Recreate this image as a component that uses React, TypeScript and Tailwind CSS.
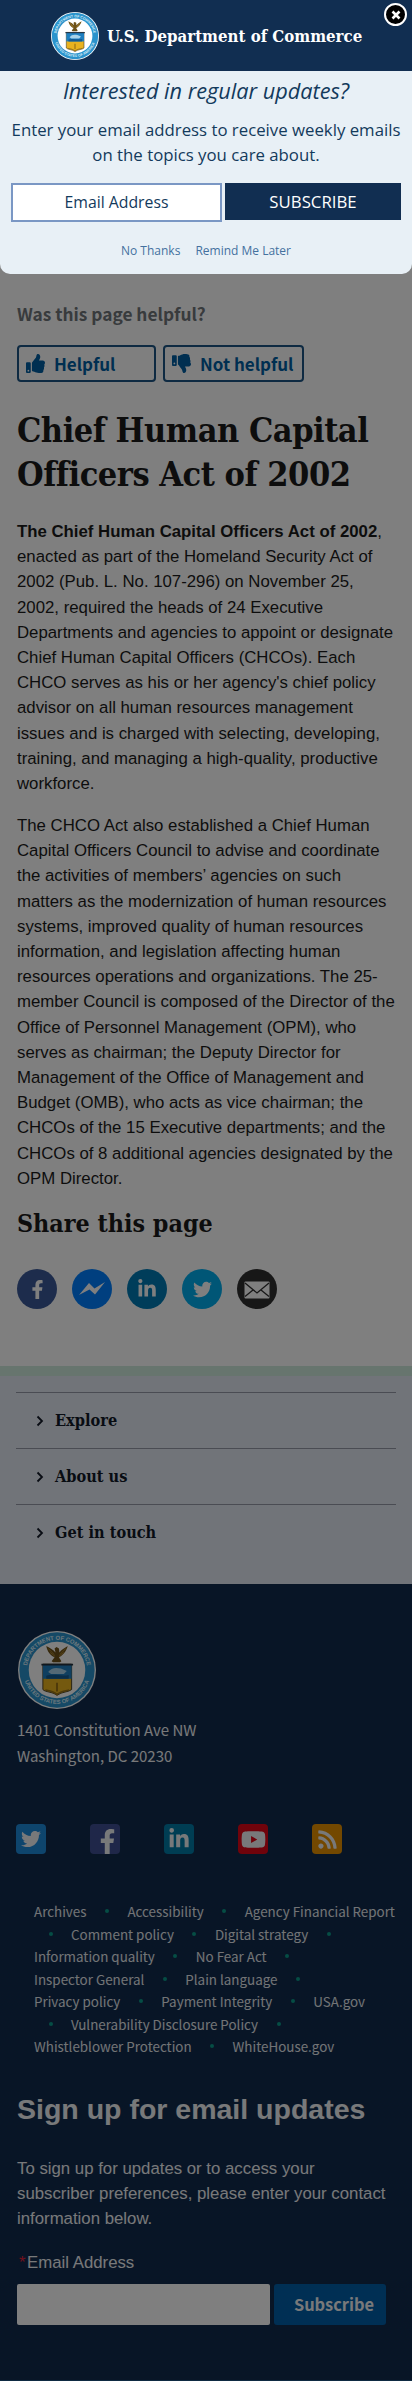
import React from "react";
import { FaFacebookF, FaTwitter, FaLinkedinIn, FaThumbsUp, FaThumbsDown, FaYoutube, FaRss } from "react-icons/fa";

const serif = "font-['DejaVu_Serif_Condensed','DejaVu_Serif',serif] font-bold";
const source = "font-['Noto_Sans_CJK_SC',sans-serif]";

function Seal({ id, className }: { id: string; className: string }) {
  return (
    <svg viewBox="0 0 80 80" className={className} aria-label="Department of Commerce seal">
      <defs>
        <path id={`${id}-top`} d="M 9 40 A 31 31 0 0 1 71 40" />
        <path id={`${id}-bottom`} d="M 5.2 40 A 34.8 34.8 0 0 0 74.8 40" />
      </defs>
      <circle cx="40" cy="40" r="40" fill="#fff" />
      <circle cx="40" cy="40" r="38.6" fill="#2b93cc" />
      <circle cx="40" cy="40" r="29" fill="#fff" />
      <g fill="#d8edf8" fontFamily="Liberation Sans, sans-serif" fontWeight="700" fontSize="6">
        <text textAnchor="middle">
          <textPath href={`#${id}-top`} startOffset="50%">DEPARTMENT OF COMMERCE</textPath>
        </text>
        <text textAnchor="middle">
          <textPath href={`#${id}-bottom`} startOffset="50%">UNITED STATES OF AMERICA</textPath>
        </text>
      </g>
      <path
        d="M29 15.500C30 21 33 25 37.500 27L34.500 31L36 32H43L44.500 31L42 27C46 25 49.500 21 51 15.500C47 18 44 20 42.500 22L42 18L39.500 16.500L37.500 18L38.500 22C36 19 33 18 29 15.500Z"
        fill="#6d5119"
      />
      <path d="M31 18L37 24M49 18L43 24M33 22L38 26M47 22L42 26" stroke="#b08c35" strokeWidth=".9" />
      <path d="M25.500 34H55V60C52 63 45 62 40 66C35 62 28 63 25.500 60Z" fill="#e9b21f" stroke="#3a3320" strokeWidth=".9" />
      <path d="M25.500 34H55V49H25.500Z" fill="#1f7fc0" />
      <path d="M24 33.500H56.500V35.300H24Z" fill="#22303f" />
      <path d="M31 42C34 38 38 37 44 38.500L50 41L47 44H34Z" fill="#a9d3ea" />
      <path d="M29 46C36 43 44 47 52 45V49H29Z" fill="#145a91" />
      <path d="M39.200 53H40.800V62H39.200Z" fill="#8a6412" />
      <path d="M28 60.500C33 61.500 37 62 40 65C43 62 48 61.500 52.500 60.500" fill="none" stroke="#9a7417" strokeWidth="1.500" />
    </svg>
  );
}

function ShareIcon({ kind }: { kind: string }) {
  const fills: Record<string, string> = {
    facebook: "bg-[#3b5998]",
    messenger: "bg-[#007fff]",
    linkedin: "bg-[#007bb5]",
    twitter: "bg-[#00aced]",
    email: "bg-[#2f2f2f]",
  };
  return (
    <a className={`flex size-10 items-center justify-center rounded-full text-white ${fills[kind]}`}>
      {kind === "facebook" && <FaFacebookF className="size-[19px]" />}
      {kind === "messenger" && (
        <svg viewBox="0 0 26 14" className="w-[26px]" fill="currentColor">
          <path d="M0 13L10 1L15.500 6.500L26 0L16 12.500L10.500 7.500Z" />
        </svg>
      )}
      {kind === "linkedin" && <FaLinkedinIn className="size-[20px]" />}
      {kind === "twitter" && <FaTwitter className="size-[19px]" />}
      {kind === "email" && (
        <svg viewBox="0 0 26 18" className="mt-0.5 w-[26px]">
          <rect x=".5" y=".5" width="25" height="17" rx="1" fill="#fff" />
          <path d="M1 2L13 12L25 2M1 15.500L9 9M25 15.500L17 9" fill="none" stroke="#2f2f2f" strokeWidth="1.300" />
        </svg>
      )}
    </a>
  );
}

const share = ["facebook", "messenger", "linkedin", "twitter", "email"];

const linkRows: { lead?: boolean; items: string[]; trail?: boolean }[] = [
  { items: ["Archives", "Accessibility", "Agency Financial Report"] },
  { lead: true, items: ["Comment policy", "Digital strategy"], trail: true },
  { items: ["Information quality", "No Fear Act"], trail: true },
  { items: ["Inspector General", "Plain language"], trail: true },
  { items: ["Privacy policy", "Payment Integrity", "USA.gov"] },
  { lead: true, items: ["Vulnerability Disclosure Policy"], trail: true },
  { items: ["Whistleblower Protection", "WhiteHouse.gov"] },
];

function Dot({ lead }: { lead?: boolean }) {
  return (
    <span className={`flex justify-center ${lead ? "w-[37px] pr-1" : "w-[41px]"}`}>
      <span className="size-[4px] rounded-full bg-[#0b9a8a]" />
    </span>
  );
}

function Modal() {
  return (
    <section className="absolute inset-x-0 top-0 z-20 h-[274px] overflow-hidden rounded-b-[10px] bg-[#e8f0f6] font-['Open_Sans',sans-serif] text-[#133a5c]">
      <header className="flex h-[71px] items-center bg-[#112e51] pl-[51px]">
        <Seal id="seal-small" className="size-[48px]" />
        <span className={`ml-2 whitespace-nowrap text-[16.7px] leading-6 text-white ${serif}`}>U.S. Department of Commerce</span>
      </header>
      <button className="absolute right-[5px] top-[3px] flex size-[23px] items-center justify-center rounded-full border-2 border-white bg-black" aria-label="Close">
        <svg viewBox="0 0 10 10" className="size-[10px]">
          <path d="M1.500 1.500L8.500 8.500M8.500 1.500L1.500 8.500" stroke="#fff" strokeWidth="2.600" />
        </svg>
      </button>
      <h2 className="mt-[5px] whitespace-nowrap text-center text-[21.7px] italic leading-[30px]">Interested in regular updates?</h2>
      <p className="mt-[11px] whitespace-nowrap text-center text-[16.8px] leading-[25px]">
        Enter your email address to receive weekly emails
        <br />
        on the topics you care about.
      </p>
      <form className="mt-[16px] flex gap-[3px] pl-[11px]">
        <div className="flex h-[39px] w-[211px] items-center justify-center border-2 border-[#7a97c4] bg-white text-[15.8px]">Email Address</div>
        <div className="flex h-[37px] w-[176px] items-center justify-center bg-[#112e51] text-[16.8px] text-white">SUBSCRIBE</div>
      </form>
      <div className="mt-[19px] flex justify-center gap-[15px] text-[12px] leading-5 text-[#44719f]">
        <a>No Thanks</a>
        <a>Remind Me Later</a>
      </div>
    </section>
  );
}

export default function App() {
  return (
    <div className="relative h-[2381px] w-[412px] overflow-hidden bg-white font-['Liberation_Sans',sans-serif] text-[16.8px] leading-[25.2px] text-[#1b1b1b]">
      <main className="h-[1366px] px-[17px] pt-[301px]">
        <div className={`text-[17.3px] font-bold leading-[26px] text-[#71767a] ${source}`}>Was this page helpful?</div>
        <div className={`mt-[18px] flex gap-[7px] text-[17px] font-bold text-[#005ea2] ${source}`}>
          <button className="flex h-[37px] w-[139px] items-center gap-[9px] rounded-[4px] border-2 border-[#1c5484] pl-[7px]">
            <FaThumbsUp className="size-[19px]" />
            Helpful
          </button>
          <button className="flex h-[37px] w-[141px] items-center gap-[9px] whitespace-nowrap rounded-[4px] border-2 border-[#1c5484] pl-[7px]">
            <FaThumbsDown className="size-[19px] shrink-0" />
            Not helpful
          </button>
        </div>
        <h1 className={`mt-[26px] whitespace-nowrap text-[34px] leading-[44px] tracking-[-0.48px] ${serif}`}>
          Chief Human Capital
          <br />
          Officers Act of 2002
        </h1>
        <p className="mt-[23px] whitespace-nowrap">
          <strong>The Chief Human Capital Officers Act of 2002</strong>,<br />
          enacted as part of the Homeland Security Act of<br />
          2002 (Pub. L. No. 107-296) on November 25,<br />
          2002, required the heads of 24 Executive<br />
          Departments and agencies to appoint or designate<br />
          Chief Human Capital Officers (CHCOs). Each<br />
          CHCO serves as his or her agency's chief policy<br />
          advisor on all human resources management<br />
          issues and is charged with selecting, developing,<br />
          training, and managing a high-quality, productive<br />
          workforce.
        </p>
        <p className="mt-[16.8px] whitespace-nowrap">
          The CHCO Act also established a Chief Human<br />
          Capital Officers Council to advise and coordinate<br />
          the activities of members’ agencies on such<br />
          matters as the modernization of human resources<br />
          systems, improved quality of human resources<br />
          information, and legislation affecting human<br />
          resources operations and organizations. The 25-<br />
          member Council is composed of the Director of the<br />
          Office of Personnel Management (OPM), who<br />
          serves as chairman; the Deputy Director for<br />
          Management of the Office of Management and<br />
          Budget (OMB), who acts as vice chairman; the<br />
          CHCOs of the 15 Executive departments; and the<br />
          CHCOs of 8 additional agencies designated by the<br />
          OPM Director.
        </p>
        <h2 className={`mt-[16px] text-[24.8px] leading-[34px] ${serif}`}>Share this page</h2>
        <div className="mt-[28px] flex gap-[15px]">
          {share.map((kind) => (
            <ShareIcon key={kind} kind={kind} />
          ))}
        </div>
      </main>

      <nav className={`h-[218px] border-t-[10px] border-[#ceebdc] bg-[#e2e8f2] px-4 pt-4 text-[16.2px] text-[#111827] ${serif}`}>
        {["Explore", "About us", "Get in touch"].map((label) => (
          <div key={label} className="flex h-[56px] items-center gap-[11px] border-t border-[#9499a6] pl-[20px]">
            <svg viewBox="0 0 8 12" className="h-[12px] w-[8px]">
              <path d="M1.500 1.500L6 6L1.500 10.500" fill="none" stroke="currentColor" strokeWidth="1.800" />
            </svg>
            {label}
          </div>
        ))}
      </nav>

      <footer className="h-[797px] border-b border-[#1c5484] bg-[#112a4c] px-[17px] pt-[47px] text-[#f0f2f5]">
        <Seal id="seal-large" className="ml-px size-[78px]" />
        <address className={`mt-[8px] text-[15px] not-italic leading-[26px] text-[#f0f2f5] ${source}`}>
          1401 Constitution Ave NW
          <br />
          Washington, DC 20230
        </address>
        <div className="-ml-px mt-[55px] flex gap-[44px]">
          <a className="flex size-[30px] items-center justify-center rounded bg-[#1d8adb]"><FaTwitter className="size-[20px]" /></a>
          <a className="flex size-[30px] items-end justify-center rounded bg-[#3f4f92] pl-1"><FaFacebookF className="size-[25px]" /></a>
          <a className="flex size-[30px] items-center justify-center rounded bg-[#007ba7]"><FaLinkedinIn className="size-[22px]" /></a>
          <a className="flex size-[30px] items-center justify-center rounded bg-[#e00716]"><FaYoutube className="size-[25px]" /></a>
          <a className="flex size-[30px] items-center justify-center rounded bg-[#e69100]"><FaRss className="size-[21px]" /></a>
        </div>
        <div className={`ml-[17px] mt-[46px] whitespace-nowrap text-[13.4px] leading-[22.5px] text-[#e4e8ec] ${source}`}>
          {linkRows.map((row) => (
            <div key={row.items[0]} className="flex items-center">
              {row.lead && <Dot lead />}
              {row.items.map((item, i) => (
                <React.Fragment key={item}>
                  {i > 0 && <Dot />}
                  <a>{item}</a>
                </React.Fragment>
              ))}
              {row.trail && <Dot />}
            </div>
          ))}
        </div>
        <h2 className="mt-[33px] whitespace-nowrap text-[28.5px] font-bold leading-[36px]">Sign up for email updates</h2>
        <p className="mt-[29.5px] whitespace-nowrap">
          To sign up for updates or to access your<br />
          subscriber preferences, please enter your contact<br />
          information below.
        </p>
        <div className="mt-[18.5px] flex pl-[2px]"><span className="w-[8px] text-[#e0203a]">*</span>Email Address</div>
        <div className="mt-[8.7px] flex gap-[4px]">
          <div className="h-[41px] w-[253px] rounded-[2px] bg-white" />
          <div className={`flex h-[41px] w-[112px] items-center justify-center rounded-[3px] bg-[#005ea8] pl-2 text-[16.4px] font-bold ${source}`}>Subscribe</div>
        </div>
      </footer>

      <div className="absolute inset-0 z-10 bg-black/50" />
      <Modal />
    </div>
  );
}
